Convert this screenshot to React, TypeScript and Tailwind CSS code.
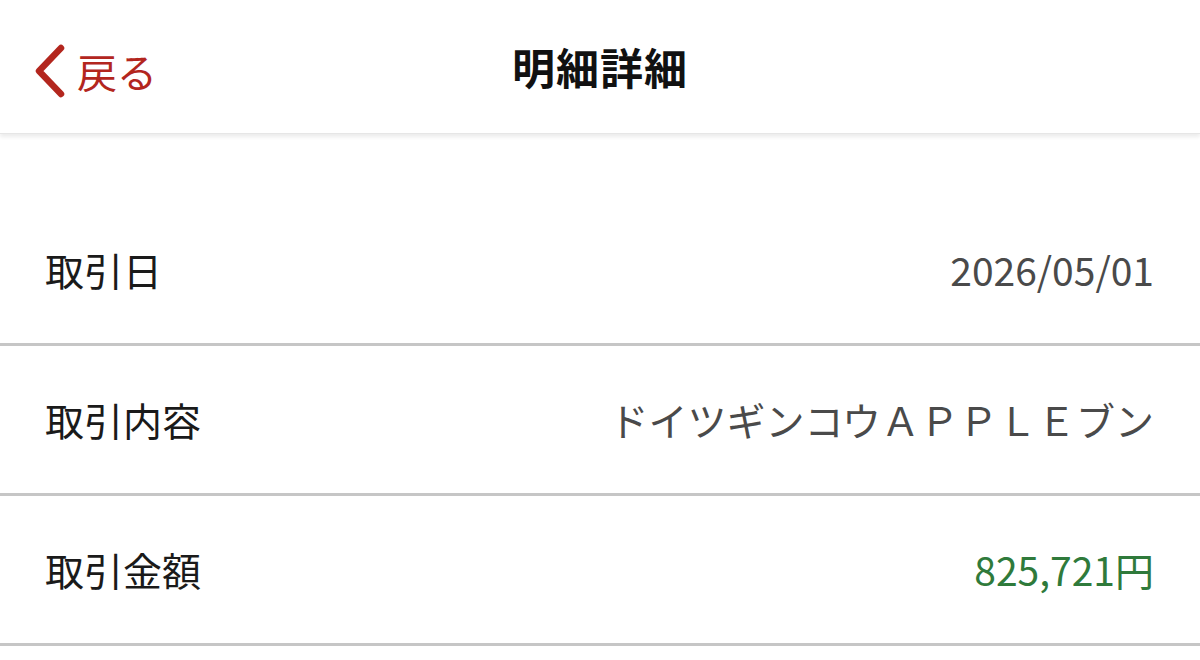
import React from 'react';

interface Row {
  label: string;
  value: string;
  valueClass: string;
}

const rows: Row[] = [
  { label: '取引日', value: '2026/05/01', valueClass: 'text-[#4a4a4a]' },
  { label: '取引内容', value: 'ドイツギンコウＡＰＰＬＥブン', valueClass: 'text-[#4a4a4a]' },
  { label: '取引金額', value: '825,721円', valueClass: 'text-[#2f7a3b]' },
];

function BackChevron() {
  return (
    <svg width="34" height="54" viewBox="0 0 34 54" fill="none">
      <path d="M28 4 L6 27 L28 50" stroke="#b3261e" strokeWidth="6.5" strokeLinecap="round" strokeLinejoin="round" />
    </svg>
  );
}

export default function App() {
  return (
    <div
      className="w-[1200px] h-[660px] bg-white overflow-hidden"
      style={{ fontFamily: '"Noto Sans CJK JP", "Noto Sans", sans-serif' }}
    >
      <header className="relative h-[134px] flex items-center justify-center bg-white shadow-[0_3px_4px_rgba(0,0,0,0.08)] border-b border-[#e6e6e6]">
        <button className="absolute left-[33px] top-[44px] flex items-center gap-[10px] text-[#b3261e]">
          <BackChevron />
          <span className="text-[40px] leading-none">戻る</span>
        </button>
        <h1 className="text-[43px] font-bold text-[#111] leading-none tracking-[1px]">明細詳細</h1>
      </header>

      <main className="pt-[62px]">
        {rows.map((row) => (
          <div
            key={row.label}
            className="h-[150px] flex items-center justify-between pl-[45px] pr-[46px] border-b-[3px] border-[#c6c6c6]"
          >
            <span className="text-[39px] text-[#1a1a1a] leading-none">{row.label}</span>
            <span className={`text-[39px] leading-none ${row.valueClass}`}>{row.value}</span>
          </div>
        ))}
      </main>
    </div>
  );
}
